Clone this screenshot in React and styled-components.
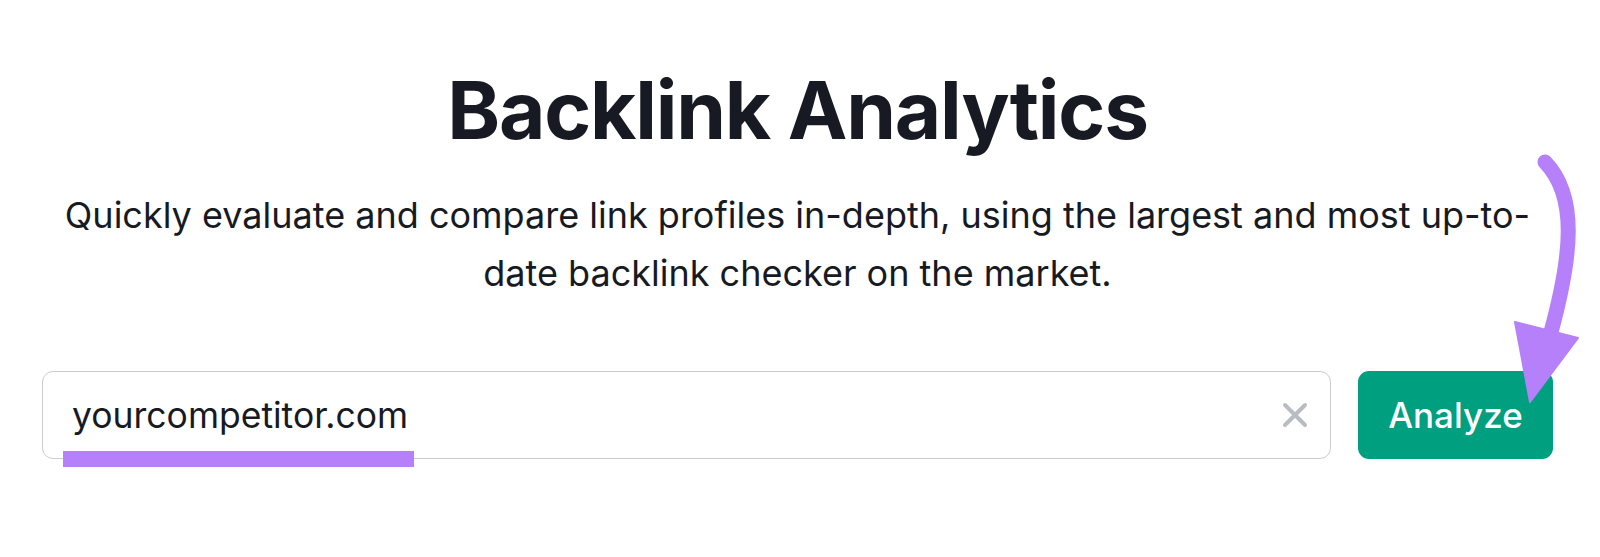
import styled, { createGlobalStyle } from "styled-components";

const GlobalStyle = createGlobalStyle`
  html, body {
    margin: 0;
    padding: 0;
    background: #fff;
  }
  body {
    font-family: Inter, "Noto Sans", Arial, sans-serif;
    color: #171a22;
  }
`;

const Page = styled.div`
  position: relative;
  width: 1600px;
  height: 557px;
  overflow: hidden;
  box-sizing: border-box;
  padding: 62px 47px 0 42px;
  display: flex;
  flex-direction: column;
  align-items: center;
`;

const Title = styled.h1`
  margin: 0;
  font-size: 80px;
  line-height: 96px;
  font-weight: 700;
  letter-spacing: -1.2px;
  text-align: center;
`;

const Lead = styled.p`
  margin: 28px 0 0;
  font-size: 36px;
  line-height: 58px;
  font-weight: 400;
  text-align: center;
  max-width: 1480px;
`;

const Form = styled.div`
  margin-top: 69px;
  align-self: stretch;
  display: flex;
  gap: 27px;
`;

const Field = styled.div`
  position: relative;
  flex: 1;
  height: 88px;
  box-sizing: border-box;
  border: 1.5px solid #c9ccd2;
  border-radius: 11px;
  display: flex;
  align-items: center;
  padding: 0 22px 0 29px;
`;

const Value = styled.span`
  flex: 1;
  font-size: 35.5px;
  color: #171a22;
`;

const Highlight = styled.span`
  position: absolute;
  left: 20px;
  width: 351px;
  bottom: -9px;
  height: 16px;
  background: #b580f9;
`;

const Clear = styled.svg`
  width: 26px;
  height: 26px;
  flex-shrink: 0;
`;

const Button = styled.button`
  width: 195px;
  height: 88px;
  border: none;
  border-radius: 11px;
  background: #009f7f;
  color: #fff;
  font-family: Inter, "Noto Sans", Arial, sans-serif;
  font-size: 35px;
  font-weight: 500;
  cursor: pointer;
`;

const Overlay = styled.svg`
  position: absolute;
  inset: 0;
  width: 1600px;
  height: 557px;
  pointer-events: none;
`;

export default function App() {
  return (
    <>
      <GlobalStyle />
      <Page>
        <Title>Backlink Analytics</Title>
        <Lead>
          Quickly evaluate and compare link profiles in-depth, using the largest and most up-to-date backlink checker on the market.
        </Lead>
        <Form>
          <Field>
            <Value>yourcompetitor.com</Value>
            <Clear viewBox="0 0 26 26">
              <path d="M3 3 L23 23 M23 3 L3 23" stroke="#b9bcc3" strokeWidth="4" strokeLinecap="round" />
            </Clear>
            <Highlight />
          </Field>
          <Button>Analyze</Button>
        </Form>
        <Overlay viewBox="0 0 1600 557">
          <path
            d="M1545 162 C1578 196 1572 255 1551 332"
            fill="none"
            stroke="#b580f9"
            strokeWidth="15"
            strokeLinecap="round"
          />
          <polygon points="1515,322 1578,338 1530,402" fill="#b580f9" stroke="#b580f9" strokeWidth="2" strokeLinejoin="round" />
        </Overlay>
      </Page>
    </>
  );
}
